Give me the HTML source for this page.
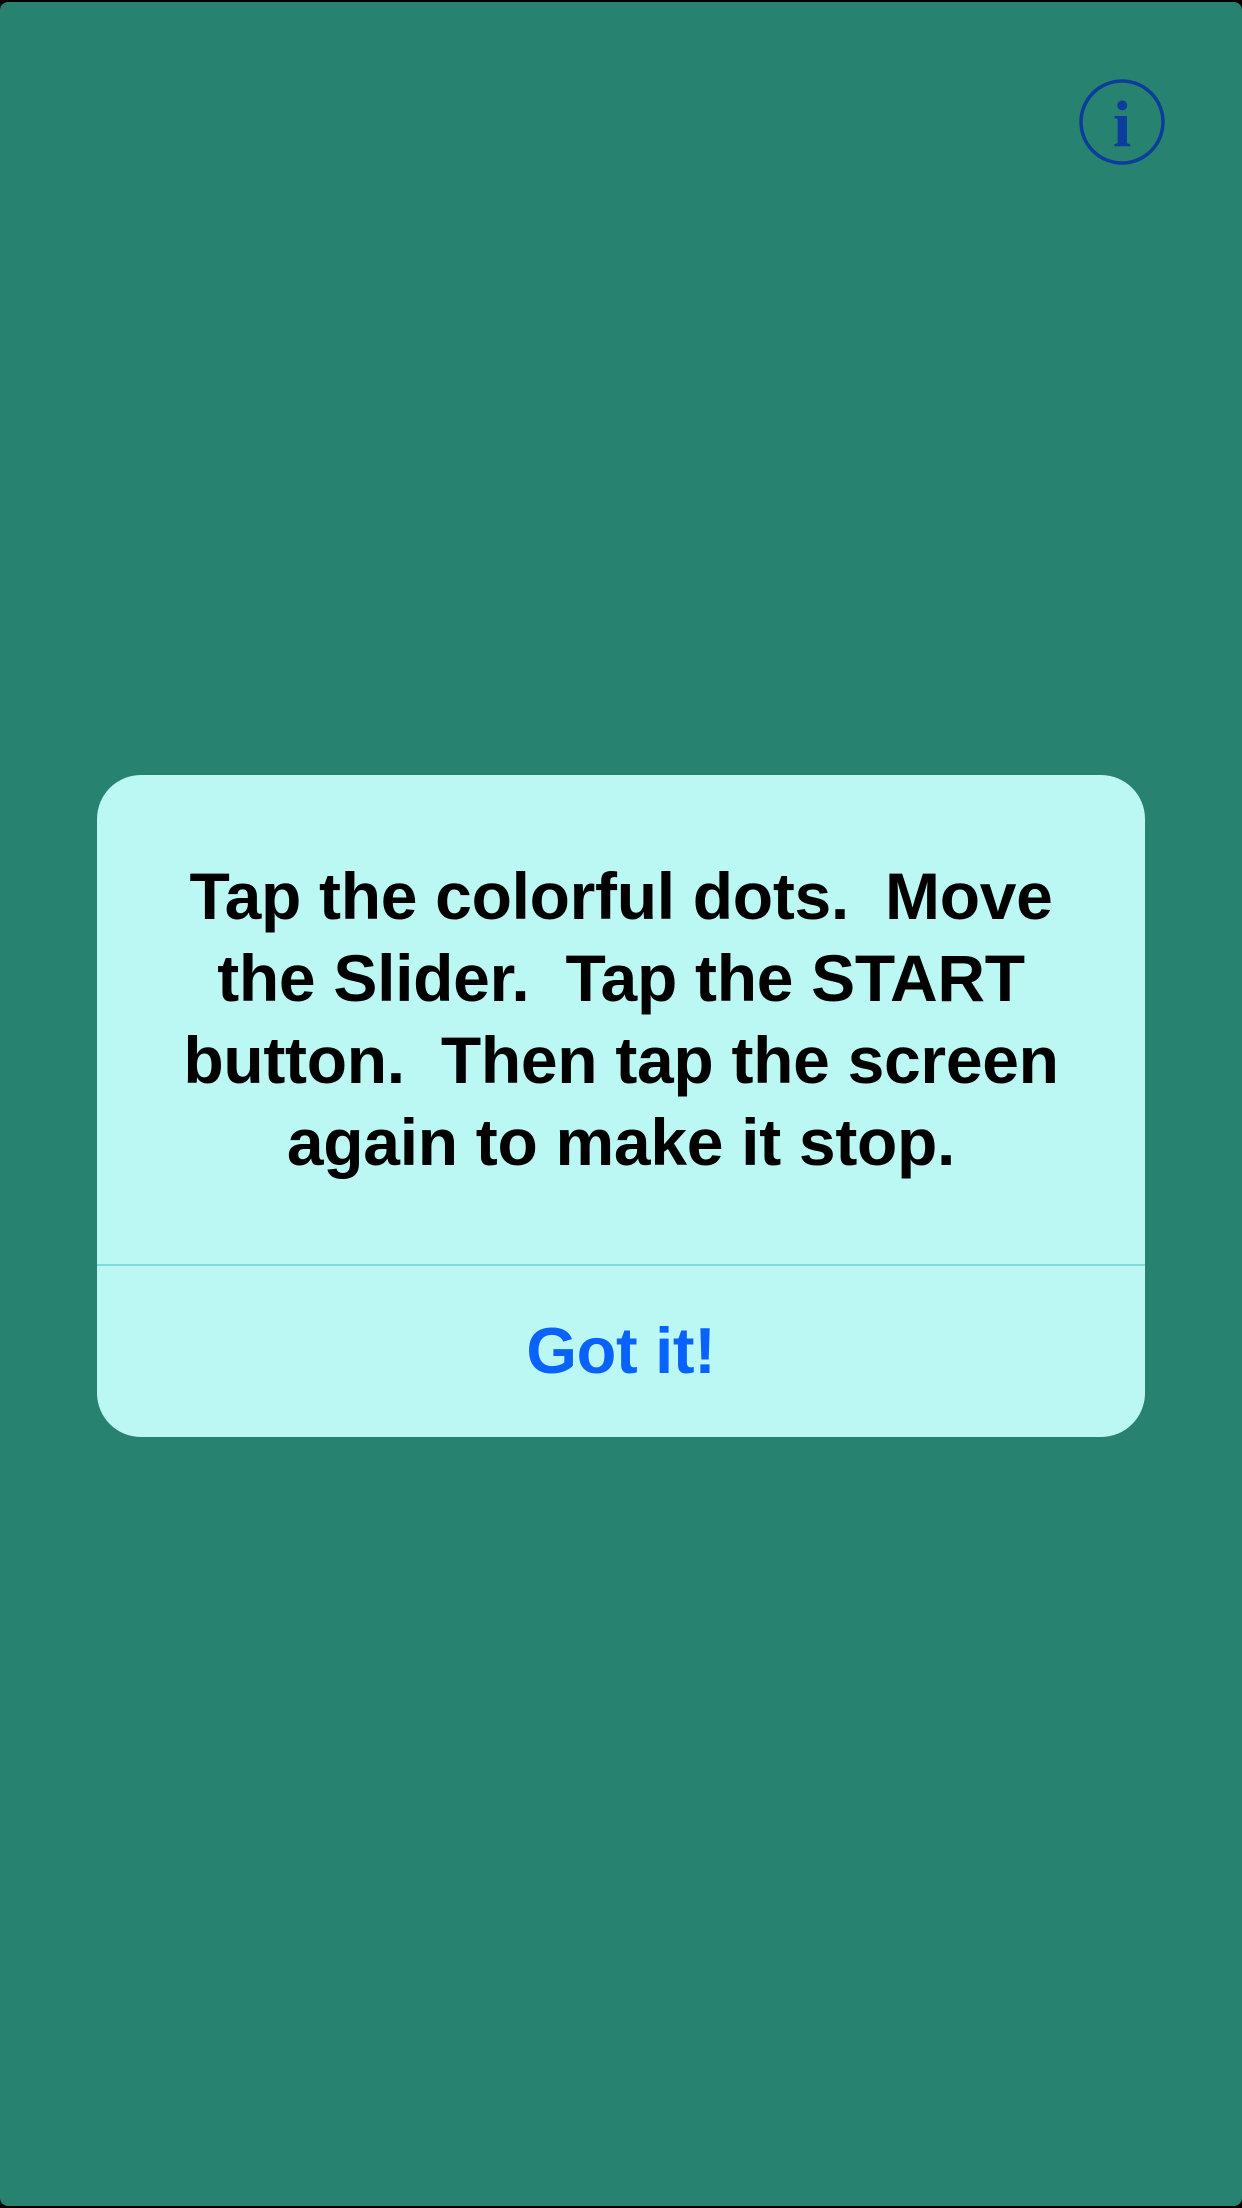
<!DOCTYPE html>
<html><head><meta charset="utf-8"><style>
html,body{margin:0;padding:0;background:#000;}
.screen{position:absolute;left:0;top:2px;width:1242px;height:2204px;background:#27836f;border-radius:8px;overflow:hidden;}
.dlg{position:absolute;left:97px;top:773px;width:1048px;height:662px;background:#bbf8f4;border-radius:44px;}
.msg{position:absolute;left:0;top:80px;width:100%;text-align:center;font-family:"Liberation Sans",sans-serif;font-weight:bold;font-size:66px;line-height:82px;color:#000;white-space:pre;letter-spacing:-0.3px;}
.div{position:absolute;left:0;top:489px;width:100%;height:2px;background:#7fdcd8;}
.btn{position:absolute;left:0;top:536px;width:100%;text-align:center;font-family:"Liberation Sans",sans-serif;font-weight:bold;font-size:65px;line-height:80px;color:#0a62fd;letter-spacing:-0.3px;}
</style></head><body>
<div class="screen">
<svg style="position:absolute;left:1077px;top:75px" width="90" height="90" viewBox="0 0 90 90">
<circle cx="45" cy="45" r="41" fill="none" stroke="#0b3c9e" stroke-width="3.5"/>
<text x="45" y="69" text-anchor="middle" font-family="Liberation Serif,serif" font-weight="bold" font-size="66" fill="#0b3c9e">i</text>
</svg>
<div class="dlg">
<div class="msg">Tap the colorful dots.  Move
the Slider.  Tap the START
button.  Then tap the screen
again to make it stop.</div>
<div class="div"></div>
<div class="btn">Got it!</div>
</div>
</div>
</body></html>
